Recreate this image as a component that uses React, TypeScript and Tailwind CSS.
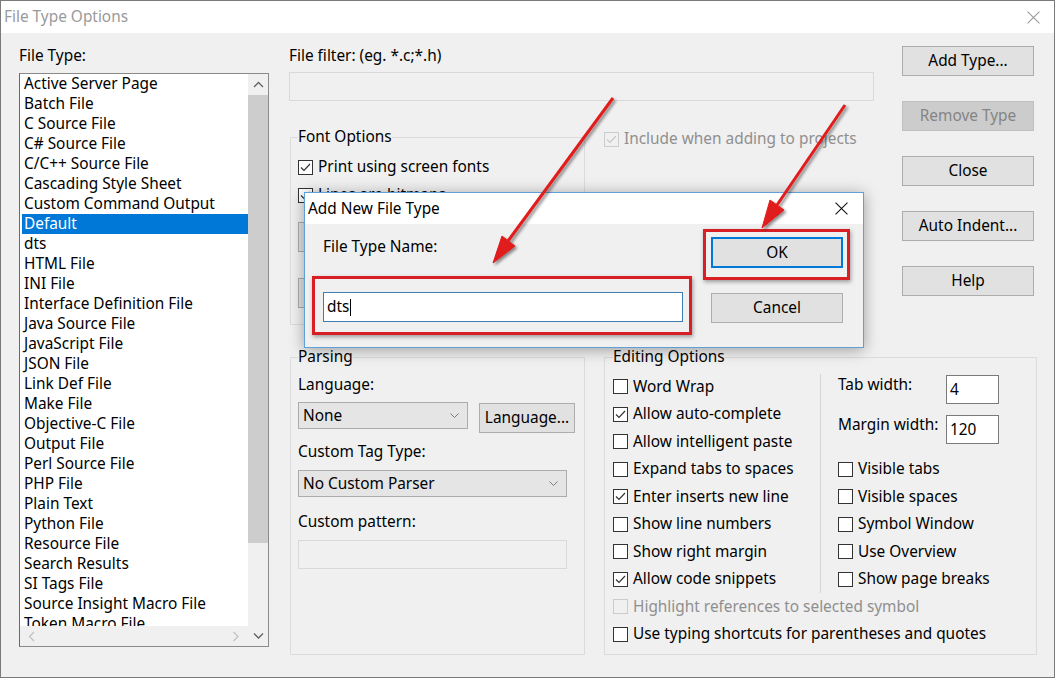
const fileTypes = [
  "Active Server Page",
  "Batch File",
  "C Source File",
  "C# Source File",
  "C/C++ Source File",
  "Cascading Style Sheet",
  "Custom Command Output",
  "Default",
  "dts",
  "HTML File",
  "INI File",
  "Interface Definition File",
  "Java Source File",
  "JavaScript File",
  "JSON File",
  "Link Def File",
  "Make File",
  "Objective-C File",
  "Output File",
  "Perl Source File",
  "PHP File",
  "Plain Text",
  "Python File",
  "Resource File",
  "Search Results",
  "SI Tags File",
  "Source Insight Macro File",
  "Token Macro File",
];

type CheckProps = { label: string; checked?: boolean; disabled?: boolean };

function Check({ label, checked, disabled }: CheckProps) {
  return (
    <div className="flex items-center gap-[5px] whitespace-nowrap">
      <span
        className={
          disabled
            ? "flex h-[15px] w-[15px] shrink-0 items-center justify-center border border-[#cccccc]"
            : "flex h-[15px] w-[15px] shrink-0 items-center justify-center border border-[#333333] bg-white"
        }
      >
        {checked && (
          <svg width="11" height="9" viewBox="0 0 11 9">
            <path d="M1 4.5 L4 7.5 L10 1" fill="none" stroke={disabled ? "#c8c8c8" : "#333"} strokeWidth="1.2" />
          </svg>
        )}
      </span>
      <span className={disabled ? "text-[#8f8f8f]" : "text-black"}>{label}</span>
    </div>
  );
}

function Chevron({ dir, color = "#606060" }: { dir: "up" | "down" | "left" | "right"; color?: string }) {
  const d =
    dir === "up" ? "M1 6 L5.5 1.5 L10 6" : dir === "down" ? "M1 1.5 L5.5 6 L10 1.5" : dir === "left" ? "M6 1 L1.5 5.5 L6 10" : "M1.5 1 L6 5.5 L1.5 10";
  const w = dir === "up" || dir === "down" ? 11 : 8;
  const h = dir === "up" || dir === "down" ? 8 : 11;
  return (
    <svg width={w} height={h} viewBox={`0 0 ${w} ${h}`}>
      <path d={d} fill="none" stroke={color} strokeWidth="1.3" />
    </svg>
  );
}

function Btn({ label, disabled }: { label: string; disabled?: boolean }) {
  return (
    <div
      className={
        disabled
          ? "flex h-[30px] w-[132px] items-center justify-center border border-[#bfbfbf] bg-[#cccccc] text-[#848484]"
          : "flex h-[30px] w-[132px] items-center justify-center border border-[#adadad] bg-[#e1e1e1] text-black"
      }
    >
      {label}
    </div>
  );
}

function Select({ value, width }: { value: string; width: string }) {
  return (
    <div className={`flex h-[27px] items-center justify-between border border-[#acacac] bg-[#e5e5e5] pl-[4px] pr-[8px] ${width}`}>
      <span>{value}</span>
      <svg width="9" height="6" viewBox="0 0 9 6">
        <path d="M0.5 0.5 L4.5 4.5 L8.5 0.5" fill="none" stroke="#7a7a7a" strokeWidth="1" />
      </svg>
    </div>
  );
}

function XIcon({ color, size }: { color: string; size: number }) {
  return (
    <svg width={size} height={size} viewBox="0 0 12 12">
      <path d="M0.5 0.5 L11.5 11.5 M11.5 0.5 L0.5 11.5" stroke={color} strokeWidth="1" />
    </svg>
  );
}

export default function App() {
  return (
    <div className="relative h-[678px] w-[1055px] overflow-hidden border border-[#7a7a7a] bg-[#f0f0f0] font-['Noto_Sans',sans-serif] text-[15.4px] leading-[20px] text-black">
      {/* title bar */}
      <div className="flex h-[32px] items-center justify-between bg-white pl-[3px] pr-[14px]">
        <span className="text-[#9a9a9a]">File Type Options</span>
        <XIcon color="#9a9a9a" size={13} />
      </div>

      <div className="flex pl-[18px] pt-px">
        {/* file type list */}
        <div className="flex w-[250px] flex-col pt-[12px]">
          <div>File Type:</div>
          <div className="mt-[7px] flex h-[574px] border border-[#8a8a8a] border-l-[#6a6a6a] bg-white">
            <div className="flex min-w-0 flex-1 flex-col">
              <div className="flex-1 overflow-hidden pl-[2px]">
                {fileTypes.map((t) => (
                  <div
                    key={t}
                    className={
                      t === "Default"
                        ? "h-[20px] whitespace-nowrap bg-[#0078d7] pl-[2px] text-white"
                        : "h-[20px] whitespace-nowrap pl-[2px]"
                    }
                  >
                    {t}
                  </div>
                ))}
              </div>
              <div className="flex h-[20px] items-center justify-between bg-[#f0f0f0] px-[8px]">
                <Chevron dir="left" color="#c2c2c2" />
                <Chevron dir="right" color="#c2c2c2" />
              </div>
            </div>
            <div className="flex w-[20px] flex-col bg-[#f0f0f0]">
              <div className="flex h-[21px] items-center justify-center">
                <Chevron dir="up" />
              </div>
              <div className="h-[448px] bg-[#cdcdcd]" />
              <div className="flex-1" />
              <div className="flex h-[21px] items-center justify-center">
                <Chevron dir="down" />
              </div>
            </div>
          </div>
        </div>

        {/* middle and right */}
        <div className="ml-[20px] flex flex-col">
          <div className="flex">
            <div className="flex w-[585px] flex-col pt-[12px]">
              <div>File filter: (eg. *.c;*.h)</div>
              <div className="mt-[6px] h-[29px] w-[585px] border border-[#d9d9d9] bg-[#f0f0f0]" />
              <div className="mt-[26px] flex">
                <fieldset className="ml-px h-[198px] w-[295px] border border-[#dcdcdc] pl-[7px]">
                  <legend>Font Options</legend>
                  <div className="pt-[6px]">
                    <div className="flex h-[28px] items-center">
                      <Check label="Print using screen fonts" checked />
                    </div>
                    <div className="flex h-[28px] items-center">
                      <Check label="Lines are bitmaps" checked />
                    </div>
                    <div className="mt-[13px] h-[30px] w-[150px] border border-[#adadad] bg-[#e1e1e1]" />
                    <div className="mt-[26px] h-[30px] w-[150px] border border-[#adadad] bg-[#e1e1e1]" />
                  </div>
                </fieldset>
                <div className="ml-[19px] mt-[2px]">
                  <Check label="Include when adding to projects" checked disabled />
                </div>
              </div>
            </div>
            <div className="ml-[28px] flex flex-col gap-[25px] pt-[12px]">
              <Btn label="Add Type..." />
              <Btn label="Remove Type" disabled />
              <Btn label="Close" />
              <Btn label="Auto Indent..." />
              <Btn label="Help" />
            </div>
          </div>

          <div className="mt-[22px] flex">
            {/* parsing */}
            <fieldset className="ml-px h-[308px] w-[295px] border border-[#dcdcdc] pl-[7px]">
              <legend>Parsing</legend>
              <div className="pt-[8px]">
                <div>Language:</div>
                <div className="mt-[7px] flex items-start gap-[11px]">
                  <Select value="None" width="w-[170px]" />
                  <div className="mt-px flex h-[30px] w-[96px] items-center justify-center border border-[#adadad] bg-[#e1e1e1]">
                    Language...
                  </div>
                </div>
                <div className="mt-[9px]">Custom Tag Type:</div>
                <div className="mt-[8px]">
                  <Select value="No Custom Parser" width="w-[269px]" />
                </div>
                <div className="mt-[15px]">Custom pattern:</div>
                <div className="mt-[8px] h-[29px] w-[269px] border border-[#d9d9d9] bg-[#f0f0f0]" />
              </div>
            </fieldset>

            {/* editing options */}
            <fieldset className="ml-[19px] h-[308px] w-[433px] border border-[#dcdcdc] pl-[8px]">
              <legend>Editing Options</legend>
              <div className="pt-[6px]">
                <div className="flex">
                  <div className="flex w-[207px] flex-col">
                    {[
                      ["Word Wrap", false],
                      ["Allow auto-complete", true],
                      ["Allow intelligent paste", false],
                      ["Expand tabs to spaces", false],
                      ["Enter inserts new line", true],
                      ["Show line numbers", false],
                      ["Show right margin", false],
                      ["Allow code snippets", true],
                    ].map(([l, c]) => (
                      <div key={l as string} className="flex h-[27.5px] items-center">
                        <Check label={l as string} checked={c as boolean} />
                      </div>
                    ))}
                  </div>
                  <div className="mt-px h-[219px] w-px bg-[#d4d4d4]" />
                  <div className="ml-[17px] flex flex-col pt-[2px]">
                    <div className="flex items-start">
                      <span className="w-[108px]">Tab width:</span>
                      <div className="flex h-[29px] w-[53px] items-center border border-[#7a7a7a] bg-white pl-[3px]">4</div>
                    </div>
                    <div className="mt-[11px] flex items-start">
                      <span className="w-[108px]">Margin width:</span>
                      <div className="flex h-[29px] w-[53px] items-center border border-[#7a7a7a] bg-white pl-[3px]">120</div>
                    </div>
                    <div className="mt-[11.5px] flex flex-col">
                      {["Visible tabs", "Visible spaces", "Symbol Window", "Use Overview", "Show page breaks"].map((l) => (
                        <div key={l} className="flex h-[27.5px] items-center">
                          <Check label={l} />
                        </div>
                      ))}
                    </div>
                  </div>
                </div>
                <div className="flex h-[27.5px] items-center">
                  <Check label="Highlight references to selected symbol" disabled />
                </div>
                <div className="flex h-[27.5px] items-center">
                  <Check label="Use typing shortcuts for parentheses and quotes" />
                </div>
              </div>
            </fieldset>
          </div>
        </div>
      </div>

      {/* Add New File Type dialog */}
      <div className="absolute left-[303px] top-[191px] flex h-[156px] w-[560px] flex-col border border-[#5fa0d6] bg-[#f0f0f0] shadow-[0_2px_14px_rgba(0,0,0,0.35)]">
        <div className="flex h-[31px] items-center justify-between bg-white pl-[3px] pr-[15px]">
          <span>Add New File Type</span>
          <XIcon color="#111" size={13} />
        </div>
        <div className="flex flex-1 pl-[18px]">
          <div className="flex w-[360px] flex-col">
            <div className="mt-[13px]">File Type Name:</div>
            <div className="mt-[35px] flex h-[30px] items-center border border-[#3d7fb5] bg-white pl-[3px]">
              <span>dts</span>
              <span className="ml-px h-[17px] w-px bg-black" />
            </div>
          </div>
          <div className="ml-[28px] flex flex-col pt-[13px]">
            <div className="flex h-[31px] w-[132px] items-center justify-center border-2 border-[#0078d7] bg-[#e1e1e1]">OK</div>
            <div className="mt-[25px] flex h-[30px] w-[132px] items-center justify-center border border-[#adadad] bg-[#e1e1e1]">Cancel</div>
          </div>
        </div>
      </div>

      {/* red annotation boxes */}
      <div className="absolute left-[311px] top-[275px] h-[59px] w-[380px] border-[3px] border-[#d91f26] shadow-[1px_2px_4px_rgba(0,0,0,0.35)]" />
      <div className="absolute left-[702px] top-[228px] h-[51px] w-[147px] border-[3px] border-[#d91f26] shadow-[1px_2px_4px_rgba(0,0,0,0.35)]" />

      {/* red arrows */}
      <svg className="pointer-events-none absolute left-[-1px] top-[-1px]" width="1055" height="678">
        <defs>
          <filter id="sh" x="-20%" y="-20%" width="140%" height="140%">
            <feDropShadow dx="2" dy="2" stdDeviation="1.5" floodColor="#000" floodOpacity="0.45" />
          </filter>
        </defs>
        <g filter="url(#sh)" fill="#e01b1b" stroke="#e01b1b">
          <line x1="613" y1="98" x2="508" y2="241" strokeWidth="3" />
          <polygon points="493,263 515,246 502,236" strokeWidth="1" />
          <line x1="845" y1="105" x2="777" y2="205" strokeWidth="3" />
          <polygon points="762,228 784,210 770,200" strokeWidth="1" />
        </g>
      </svg>
    </div>
  );
}
